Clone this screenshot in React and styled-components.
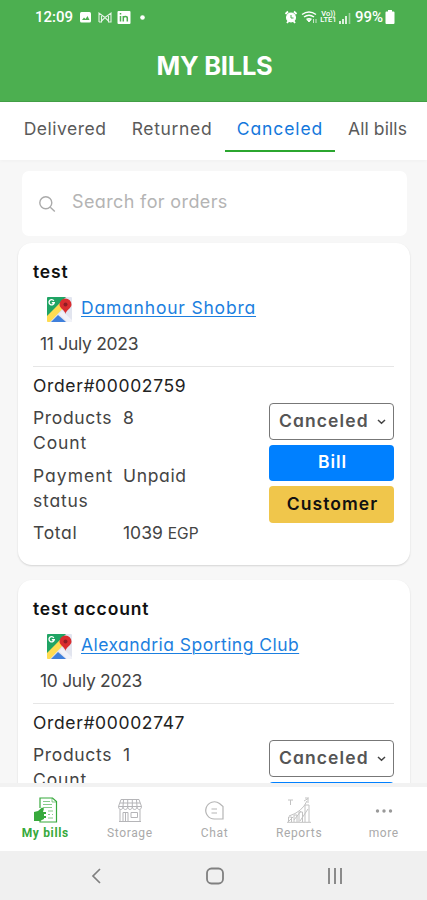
import React from 'react';
import styled, { createGlobalStyle } from 'styled-components';

const Global = createGlobalStyle`
  * { box-sizing: border-box; }
  body { margin: 0; background: #f7f7f7; }
  svg { display: block; flex: none; }
`;

const Screen = styled.div`
  width: 427px;
  height: 900px;
  overflow: hidden;
  display: flex;
  flex-direction: column;
  background: #f7f7f7;
  color: #444;
  font-family: Inter, "Liberation Sans", sans-serif;
  font-feature-settings: "cv11", "ss03";
`;

const Label = styled.span`
  white-space: nowrap;
  letter-spacing: ${(p) => p.$track || 0}px;
`;

const Header = styled.header`
  flex: none;
  height: 102px;
  background: #4caf50;
  border-bottom: 1px solid #43a047;
  color: #fff;
`;

const StatusBar = styled.div`
  height: 34px;
  padding: 0 32px 0 35px;
  display: flex;
  align-items: center;
  justify-content: space-between;
  font: 500 15px Roboto, sans-serif;
`;

const StatusGroup = styled.div`
  display: flex;
  align-items: center;
  gap: ${(p) => p.$gap}px;
`;

const Title = styled.h1`
  margin: 0;
  height: 63px;
  padding-left: 2px;
  display: flex;
  align-items: center;
  justify-content: center;
  font-size: 25.5px;
  font-weight: 700;
`;

const Tabs = styled.nav`
  flex: none;
  height: 58px;
  padding: 0 11px;
  display: flex;
  background: #fff;
  box-shadow: 0 1px 4px rgba(0, 0, 0, 0.03);
`;

const Tab = styled.a`
  width: ${(p) => p.$w}px;
  height: 50px;
  flex: none;
  display: flex;
  align-items: center;
  justify-content: center;
  padding-top: 5px;
  font-size: 17.5px;
  color: ${(p) => (p.$active ? '#1478dc' : '#5a5a5a')};
  border-bottom: 2px solid ${(p) => (p.$active ? '#2ba62f' : 'transparent')};
`;

const Content = styled.main`
  height: 623px;
  flex: none;
  overflow: hidden;
  padding: 11px 17px 0 18px;
`;

const Search = styled.div`
  height: 65px;
  margin: 0 3px 7px 4px;
  padding: 0 0 4px 16px;
  display: flex;
  align-items: center;
  gap: 16px;
  background: #fff;
  border-radius: 7px;
  color: #b4b4b4;
  font-size: 18px;
  svg { margin-top: 5px; }
`;

const Card = styled.article`
  height: 322px;
  margin-bottom: 15px;
  padding: 14px 16px 0 15px;
  background: #fff;
  border-radius: 14px;
  box-shadow: 0 1px 2px rgba(0, 0, 0, 0.14);
`;

const Name = styled.h2`
  margin: 0;
  height: 29px;
  line-height: 29px;
  font-size: 17.5px;
  font-weight: 600;
  color: #111;
`;

const Place = styled.div`
  height: 43px;
  padding: 0 0 0 14px;
  display: flex;
  align-items: center;
  gap: 9px;
  svg { margin-top: 3px; }
`;

const PlaceLink = styled.a`
  font-size: 17.5px;
  color: #1c7fe0;
  text-decoration: underline;
  text-decoration-thickness: 1px;
  text-underline-offset: 2px;
`;

const DateLine = styled.div`
  height: 38px;
  padding-left: 7px;
  line-height: 29px;
  font-size: 17.5px;
  border-bottom: 1px solid #e6e6e6;
`;

const OrderNumber = styled.div`
  height: 35px;
  line-height: 37px;
  font-size: 17.5px;
  color: #222;
`;

const Details = styled.div`
  display: flex;
  justify-content: space-between;
`;

const Facts = styled.dl`
  margin: 3px 0 0;
  display: grid;
  grid-template-columns: 90px 100px;
  row-gap: 7.5px;
  font-size: 17.5px;
  line-height: 25px;
  dt, dd { margin: 0; }
  small { font-size: 15.5px; }
`;

const Actions = styled.div`
  width: 125px;
  display: flex;
  flex-direction: column;
  gap: 5px;
  padding-top: 1px;
`;

const Button = styled.button`
  height: 36.5px;
  padding: 0 7px 2px 9px;
  display: flex;
  align-items: center;
  justify-content: ${(p) => (p.$kind === 'select' ? 'space-between' : 'center')};
  border-radius: 4px;
  border: ${(p) => (p.$kind === 'select' ? '1px solid #777' : '0')};
  background: ${(p) => ({ select: '#fff', bill: '#0080ff', customer: '#f0c64b' })[p.$kind]};
  color: ${(p) => ({ select: '#555', bill: '#fff', customer: '#111' })[p.$kind]};
  font: 600 17.5px Inter, sans-serif;
  font-feature-settings: inherit;
  svg { margin-top: 3px; }
`;

const BottomNav = styled.nav`
  flex: none;
  height: 68px;
  padding: 10px 1px 0 3px;
  border-top: 4px solid #f2f2f2;
  background: #fff;
  display: grid;
  grid-template-columns: repeat(5, 1fr);
`;

const NavItem = styled.a`
  display: flex;
  flex-direction: column;
  align-items: center;
  gap: 3px;
  font: ${(p) => (p.$active ? 700 : 400)} 12px/15px Roboto, sans-serif;
  color: ${(p) => (p.$active ? '#37a93c' : '#aaa')};
`;

const SystemBar = styled.footer`
  flex: none;
  height: 49px;
  padding-left: 4px;
  background: #f0f0f0;
  color: #808080;
  display: grid;
  grid-template-columns: 119px 119px 120px;
  justify-content: center;
  align-items: center;
  justify-items: center;
`;

const MapIcon = () => (
  <svg width="25" height="25" viewBox="0 0 25 25">
    <rect width="25" height="25" rx="1" fill="#e2e5ef" />
    <path d="M0 1Q0 0 1 0H19L0 20Z" fill="#20a464" />
    <path d="M0 19 17 2l4 4L3 25H1q-1 0-1-1Z" fill="#ffdc51" />
    <path d="m4 25 7-7 8 7Z" fill="#3f80dc" />
    <path d="m12 17 3-3 10 9v2h-5Z" fill="#f1f2f8" />
    <path d="M6.800 3.800A2.600 2.600 0 1 0 7.200 5.800H4.800" fill="none" stroke="#fff" strokeWidth="1.400" />
    <path d="M18.500 17c-.5-4-6-5.500-6-9.500a6 6 0 0 1 12 0c0 4-5.500 5.500-6 9.500Z" fill="#d92d2f" />
    <circle cx="18.500" cy="7.500" r="2" fill="#8f1d24" />
  </svg>
);

const NotificationIcons = () => (
  <svg width="68" height="16" viewBox="0 0 68 16" fill="none" stroke="#fff">
    <rect x="0" y="3" width="11" height="10.500" rx="1.500" fill="#fff" stroke="none" />
    <path d="m2 11 2-2.500 1.500 1.500 2-3L9.500 11Z" fill="#4caf50" stroke="none" />
    <path d="M19 13V4l6 4.500L31 4v9h-2.500V7M19 13h2.500V7M21.500 12 25 8.500 28.500 12" strokeWidth="1.100" opacity=".85" />
    <rect x="37.500" y="2" width="13" height="13" rx="1" fill="#fff" stroke="none" />
    <path d="M40.500 7v5.500M40.500 4v1.500M43.300 12.500V7M43.300 9q0-1.500 2-1.500t2 1.500v3.500" stroke="#4caf50" strokeWidth="1.500" />
    <circle cx="62.500" cy="8.500" r="2.300" fill="#fff" stroke="none" />
  </svg>
);

const AlarmWifiIcons = () => (
  <svg width="34" height="16" viewBox="0 0 34 16" fill="none" stroke="#fff">
    <circle cx="7" cy="8.500" r="4.300" fill="#fff" strokeWidth="1.500" />
    <path d="M1.500 5 4 2.500M12.500 5 10 2.500M3 14l1.500-2M11 14l-1.500-2" strokeWidth="1.800" />
    <path d="M7 6v3h2.500" stroke="#4caf50" />
    <path d="M18 5.500q7-5 14 0M20 8q5-3.500 10 0M22.500 10.500q2.500-1.500 5 0" strokeWidth="1.500" />
    <path d="m23.500 11 1.500 2 1.500-2Z" fill="#fff" />
    <path d="M29.500 10v4M32 10v4" opacity=".7" />
  </svg>
);

const SignalIcon = () => (
  <svg width="12" height="13" viewBox="0 0 12 13" stroke="#fff" strokeWidth="1.600">
    <path d="M1 13v-3M4 13V8M7 13V5" />
    <path d="M10.500 13V2" opacity=".45" />
  </svg>
);

const Volte = styled.span`
  width: 17px;
  display: flex;
  flex-direction: column;
  align-items: center;
  font: 500 7.5px/6.5px Roboto, sans-serif;
`;

const BatteryIcon = () => (
  <svg width="10" height="14" viewBox="0 0 10 14" fill="#fff">
    <path d="M3 0h4v1.500h1.500q1 0 1 1V13q0 1-1 1h-7q-1 0-1-1V2.500q0-1 1-1H3Z" />
  </svg>
);

const SearchIcon = () => (
  <svg width="18" height="18" viewBox="0 0 18 18" fill="none" stroke="#aaa" strokeWidth="1.400">
    <circle cx="7.800" cy="7.800" r="6" />
    <path d="m12.300 12.300 4.500 4.300" />
  </svg>
);

const Chevron = () => (
  <svg width="9" height="6" viewBox="0 0 9 6" fill="none" stroke="#444" strokeWidth="1.500">
    <path d="m1 1 3.500 3.300L8 1" />
  </svg>
);

const BillsIcon = () => (
  <svg width="26" height="26" viewBox="0 0 26 26" fill="none" stroke="#37a93c">
    <path d="M8 11V1h12.500l4 3.500V25H8v-4" strokeWidth="1.200" />
    <path d="M20 1v4h4M11 4.500h7M11 7.500h9M11 10.500h9M16 14h5M16 17.500h2M20 17.500h1M16 21h5" opacity=".6" />
    <path d="M2 15l4-1 4-3.500 2 1-1 3.500h3v2h-2v2h2v2h-2v1l-4 2H2Z" fill="#37a93c" stroke="none" />
  </svg>
);

const StoreIcon = () => (
  <svg width="26" height="26" viewBox="0 0 26 26" fill="none" stroke="#b5b5b8" strokeWidth="1">
    <path d="M4 2.500h18l2.500 7H1.500ZM3 6h20M1.500 9.500c0 4 4.500 4 4.500 0 0 4 4.700 4 4.700 0 0 4 4.600 4 4.600 0 0 4 4.700 4 4.700 0 0 4 4.500 4 4.500 0M6.500 3 6 9.500M10.700 3v6.500M15.300 3v6.500M19.500 3l.5 6.500M3 12.500V24.500h20v-12M6 24V15.500h5V24M14 15.500h6.500v5H14ZM8.500 16v8M2 24.500h22" />
  </svg>
);

const ChatIcon = () => (
  <svg width="26" height="26" viewBox="0 0 26 26" fill="none" stroke="#b5b5b5" strokeWidth="1.200">
    <path d="M22 22H13.500a8.600 8.600 0 1 1 5-15.500L22 9.500ZM10.500 12h5.500M10.500 16h5.500" />
  </svg>
);

const ReportsIcon = () => (
  <svg width="26" height="26" viewBox="0 0 26 26" fill="none" stroke="#c2c2c2">
    <path d="M2.500 25v-5h3v5M8 25v-7h3v7M13 25V15h3.500v10M19 25V8h4v17M1 25.300h24" />
    <path d="M3 19q13-4 18-15M18 4l4-2.500V6M2 3h5M4.500 3v5M19 1h4M8 23 15 14M14 24l8-12M3 24l4-4" />
  </svg>
);

const MoreIcon = () => (
  <svg width="26" height="26" viewBox="0 0 26 26" fill="#999">
    <circle cx="6.500" cy="14" r="1.700" /><circle cx="13" cy="14" r="1.700" /><circle cx="19.500" cy="14" r="1.700" />
  </svg>
);

const tabs = [
  { label: 'Delivered', w: 108, track: 0.5 },
  { label: 'Returned', w: 106, track: 0.65 },
  { label: 'Canceled', w: 110, track: 0.9, active: true },
  { label: 'All bills', w: 85, track: 0.1 },
];

const bills = [
  { name: 'test', place: 'Damanhour Shobra', placeTrack: 0.8, date: '11 July 2023', order: '00002759', count: 8, status: 'Unpaid', total: 1039 },
  { name: 'test account', place: 'Alexandria Sporting Club', placeTrack: 0.46, date: '10 July 2023', order: '00002747', count: 1, status: 'Unpaid', total: 1039 },
];

const navItems = [
  { label: 'My bills', Icon: BillsIcon, active: true, track: 0.65 },
  { label: 'Storage', Icon: StoreIcon, track: 0.65 },
  { label: 'Chat', Icon: ChatIcon, track: 0.7 },
  { label: 'Reports', Icon: ReportsIcon, track: 0.65 },
  { label: 'more', Icon: MoreIcon, track: 0.5 },
];

function Bill({ bill }) {
  return (
    <Card>
      <Name><Label $track={0.85}>{bill.name}</Label></Name>
      <Place><MapIcon /><PlaceLink><Label $track={bill.placeTrack}>{bill.place}</Label></PlaceLink></Place>
      <DateLine><Label $track={-0.3}>{bill.date}</Label></DateLine>
      <OrderNumber><Label $track={0.64}>Order#{bill.order}</Label></OrderNumber>
      <Details>
        <Facts>
          <dt><Label $track={0.65}>Products</Label><br /><Label $track={0.9}>Count</Label></dt><dd>{bill.count}</dd>
          <dt><Label $track={1}>Payment</Label><br /><Label $track={0.8}>status</Label></dt><dd><Label $track={0.65}>{bill.status}</Label></dd>
          <dt><Label $track={0.7}>Total</Label></dt><dd><Label>{bill.total} <small>EGP</small></Label></dd>
        </Facts>
        <Actions>
          <Button $kind="select"><Label $track={1.1}>Canceled</Label><Chevron /></Button>
          <Button $kind="bill"><Label $track={0.9}>Bill</Label></Button>
          <Button $kind="customer"><Label $track={1.05}>Customer</Label></Button>
        </Actions>
      </Details>
    </Card>
  );
}

export default function App() {
  return (
    <Screen>
      <Global />
      <Header>
        <StatusBar>
          <StatusGroup $gap={7}><Label>12:09</Label><NotificationIcons /></StatusGroup>
          <StatusGroup $gap={2}>
            <AlarmWifiIcons />
            <Volte><span>Vo))</span><span>LTE1</span></Volte>
            <SignalIcon />
            <span />
            <Label>99%</Label>
            <BatteryIcon />
          </StatusGroup>
        </StatusBar>
        <Title><Label $track={-0.25}>MY BILLS</Label></Title>
      </Header>
      <Tabs>
        {tabs.map((t) => (
          <Tab key={t.label} $w={t.w} $active={t.active}><Label $track={t.track}>{t.label}</Label></Tab>
        ))}
      </Tabs>
      <Content>
        <Search><SearchIcon /><Label $track={0.37}>Search for orders</Label></Search>
        {bills.map((b) => <Bill key={b.order} bill={b} />)}
      </Content>
      <BottomNav>
        {navItems.map(({ label, Icon, active, track }) => (
          <NavItem key={label} $active={active}><Icon /><Label $track={track}>{label}</Label></NavItem>
        ))}
      </BottomNav>
      <SystemBar>
        <svg width="12" height="18" viewBox="0 0 12 18" fill="none" stroke="currentColor" strokeWidth="1.700"><path d="M10 2 3 9l7 7" /></svg>
        <svg width="20" height="18" viewBox="0 0 20 18" fill="none" stroke="currentColor" strokeWidth="1.800"><rect x="2" y="1.500" width="16" height="15" rx="4.500" /></svg>
        <svg width="18" height="18" viewBox="0 0 18 18" stroke="currentColor" strokeWidth="1.800"><path d="M3 1v16M9 1v16M15 1v16" /></svg>
      </SystemBar>
    </Screen>
  );
}
